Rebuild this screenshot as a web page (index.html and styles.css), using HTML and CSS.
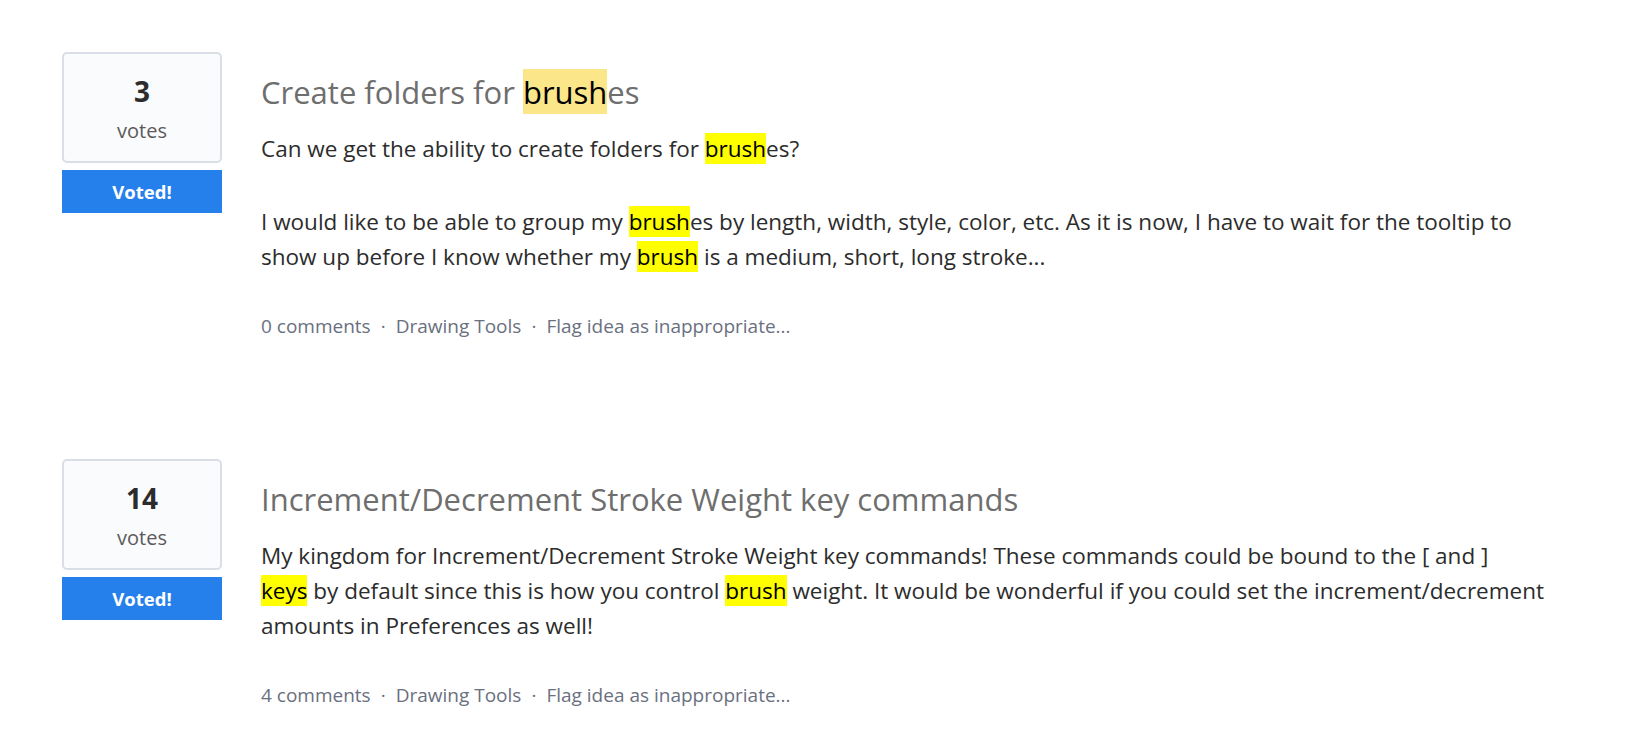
FILE: index.html
```html
<!DOCTYPE html>
<html lang="en">
<head>
<meta charset="utf-8">
<title>Ideas</title>
<link rel="stylesheet" href="styles.css">
</head>
<body>
<div class="ideas">
  <article class="idea">
    <div class="vote">
      <div class="vote-count">
        <span class="vote-num">3</span>
        <span class="vote-label">votes</span>
      </div>
      <button class="vote-btn">Voted!</button>
    </div>
    <div class="idea-body">
      <h2 class="idea-title">Create folders for <mark class="hl-title">brush</mark>es</h2>
      <div class="idea-text">
        <p>Can we get the ability to create folders for <mark class="hl">brush</mark>es?</p>
        <p>I would like to be able to group my <mark class="hl">brush</mark>es by length, width, style, color, etc. As it is now, I have to wait for the tooltip to<br>show up before I know whether my <mark class="hl">brush</mark> is a medium, short, long stroke...</p>
      </div>
      <div class="meta">
        <a class="meta-link">0 comments</a><span class="dot">·</span><a class="meta-link">Drawing Tools</a><span class="dot">·</span><a class="meta-link">Flag idea as inappropriate...</a>
      </div>
    </div>
  </article>

  <article class="idea">
    <div class="vote">
      <div class="vote-count">
        <span class="vote-num">14</span>
        <span class="vote-label">votes</span>
      </div>
      <button class="vote-btn">Voted!</button>
    </div>
    <div class="idea-body">
      <h2 class="idea-title">Increment/Decrement Stroke Weight key commands</h2>
      <div class="idea-text">
        <p>My kingdom for Increment/Decrement Stroke Weight key commands! These commands could be bound to the [ and ]<br><mark class="hl">keys</mark> by default since this is how you control <mark class="hl">brush</mark> weight. It would be wonderful if you could set the increment/decrement<br>amounts in Preferences as well!</p>
      </div>
      <div class="meta">
        <a class="meta-link">4 comments</a><span class="dot">·</span><a class="meta-link">Drawing Tools</a><span class="dot">·</span><a class="meta-link">Flag idea as inappropriate...</a>
      </div>
    </div>
  </article>
</div>
</body>
</html>
```

FILE: styles.css
```css
html, body {
  margin: 0;
  padding: 0;
  background: #ffffff;
}

body {
  font-family: "Open Sans", Lato, sans-serif;
  color: #2c2c2c;
}

.ideas {
  padding: 52px 0 0 62px;
  display: flex;
  flex-direction: column;
  gap: 121px;
}

.idea {
  display: flex;
  gap: 39px;
  align-items: flex-start;
}

.vote {
  width: 160px;
  flex: none;
  display: flex;
  flex-direction: column;
  gap: 7px;
}

.vote-count {
  box-sizing: border-box;
  height: 111px;
  border: 2px solid #d9dee7;
  border-radius: 5px;
  background: #fafbfd;
  display: flex;
  flex-direction: column;
  align-items: center;
  padding-top: 20px;
}

.vote-num {
  font-size: 28px;
  font-weight: 700;
  line-height: 34px;
  color: #2c2c2c;
}

.vote-label {
  font-size: 20px;
  line-height: 28px;
  margin-top: 9px;
  color: #5a5a5a;
}

.vote-btn {
  height: 43px;
  border: 0;
  margin: 0;
  padding: 0;
  background: #2680eb;
  color: #ffffff;
  font-family: inherit;
  font-size: 18.5px;
  font-weight: 700;
}

.idea-body {
  width: 1360px;
  padding-top: 18px;
}

.idea-title {
  margin: 0;
  font-size: 31px;
  line-height: 44px;
  font-weight: 400;
  color: #6e6e6e;
}

.hl-title {
  background: #fce68a;
  color: #000;
  padding: 2px 0 1px;
}

.idea-text {
  margin-top: 17px;
  font-size: 22.5px;
  line-height: 35px;
}

.idea-text p {
  margin: 0;
}

.idea-text p + p {
  margin-top: 38px;
}

.hl {
  background: #ffff00;
  color: #000;
  padding: 0;
}

.meta {
  margin-top: 40px;
  font-size: 19px;
  line-height: 24px;
  color: #6a7080;
}

.meta-link {
  color: #6a7080;
  text-decoration: none;
}

.dot {
  margin: 0 10px;
}
```
